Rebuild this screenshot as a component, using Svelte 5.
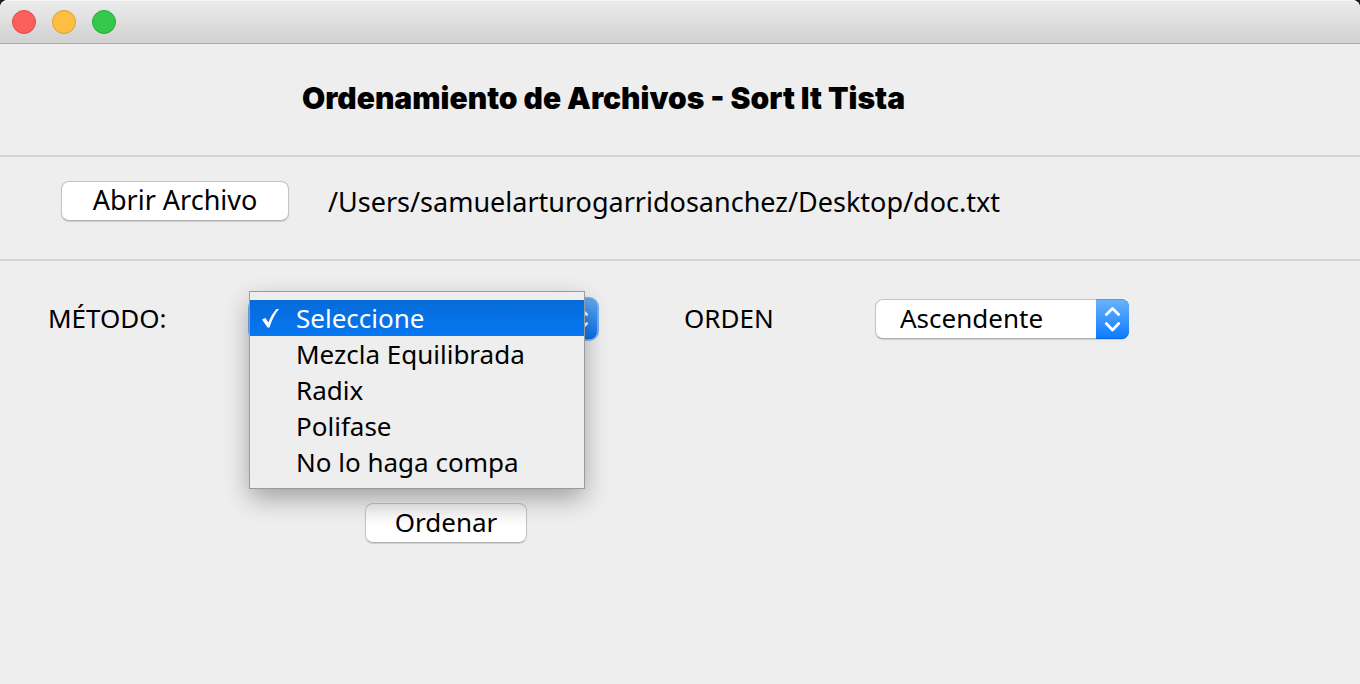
<script>
  const methods = ['Seleccione', 'Mezcla Equilibrada', 'Radix', 'Polifase', 'No lo haga compa'];
  let method = $state('Seleccione');
  let order = $state('Ascendente');
  let open = $state(true);

  function choose(name) {
    method = name;
    open = false;
  }
</script>

{#snippet arrows()}
  <span class="arrows">
    <svg viewBox="0 0 33 40" width="33" height="40" aria-hidden="true">
      <path d="M10.3 15.5 16.500 9.500l6.200 6M10.300 24.500 16.500 31l6.200-6.500" fill="none" stroke="#fff" stroke-width="2.700" stroke-linecap="round" stroke-linejoin="round" />
    </svg>
  </span>
{/snippet}

<div class="window">
  <header class="titlebar">
    <button class="light red" aria-label="Cerrar"></button>
    <button class="light yellow" aria-label="Minimizar"></button>
    <button class="light green" aria-label="Maximizar"></button>
  </header>

  <section class="heading">
    <h1>Ordenamiento de Archivos - Sort It Tista</h1>
  </section>

  <section class="file">
    <button class="push open-file">Abrir Archivo</button>
    <span class="path">/Users/samuelarturogarridosanchez/Desktop/doc.txt</span>
  </section>

  <main>
    <div class="fields">
      <label for="method">MÉTODO:</label>
      <div class="combo focused">
        <select id="method" bind:value={method} onmousedown={(e) => { e.preventDefault(); open = !open; }}>
          {#each methods as name}<option>{name}</option>{/each}
        </select>
        {@render arrows()}
        {#if open}
          <div class="menu" role="listbox" aria-label="Método">
            {#each methods as name}
              <button class="item" class:selected={name === method} role="option" aria-selected={name === method} onclick={() => choose(name)}>
                <span class="mark">
                  {#if name === method}
                    <svg viewBox="0 0 18 22" width="18" height="22" aria-hidden="true">
                      <path d="M0 12.500 3.500 11 6.500 15.500Q9 8 14.500 2H17Q11 9 7.500 20.500H5.500Z" fill="#fff" />
                    </svg>
                  {/if}
                </span>
                {name}
              </button>
            {/each}
          </div>
        {/if}
      </div>
      <label class="order-label" for="order">ORDEN</label>
      <div class="combo">
        <select id="order" bind:value={order}>
          <option>Ascendente</option>
          <option>Descendente</option>
        </select>
        {@render arrows()}
      </div>
    </div>
    <button class="push sort">Ordenar</button>
  </main>
</div>

<style>
  :global(body) {
    margin: 0;
    background: #eee;
  }
  .window {
    min-height: 100vh;
    background: #eee;
    color: #000;
    font: 26px/36px "Lucida Grande", "Noto Sans", sans-serif;
  }
  button, select {
    font: inherit;
    color: inherit;
    margin: 0;
  }
  .titlebar {
    box-sizing: border-box;
    height: 44px;
    padding: 0 12px;
    display: flex;
    align-items: center;
    gap: 16px;
    border-bottom: 1px solid #acacac;
    border-radius: 8px 8px 0 0;
    background: linear-gradient(#ececec, #d1d1d1);
    box-shadow: inset 0 1px #f7f7f7, 0 -8px 0 8px #201c28;
    clip-path: inset(0);
  }
  .light {
    width: 24px;
    height: 24px;
    padding: 0;
    border: 1px solid;
    border-radius: 50%;
  }
  .red { background: #fc605c; border-color: #e04a47; }
  .yellow { background: #fdbe41; border-color: #de9f34; }
  .green { background: #35c94b; border-color: #27aa35; }
  section {
    border-bottom: 2px solid #d4d4d4;
  }
  .heading {
    padding: 36px 24px 39px 302px;
  }
  h1 {
    margin: 0;
    font: 900 30px/36px "Arial Black", Inter, sans-serif;
  }
  .file {
    display: flex;
    align-items: center;
    gap: 39px;
    padding: 24px 24px 38px 61px;
    font-size: 27px;
  }
  .push {
    box-sizing: border-box;
    height: 40px;
    padding: 0 0 2px;
    border: 1px solid #c4c4c4;
    border-bottom-color: #b0b0b0;
    border-radius: 8px;
    background: #fff;
    box-shadow: 0 1px 1px #0002;
  }
  .open-file { width: 228px; }
  .path { padding-top: 2px; }
  main { padding: 38px 24px 24px 48px; }
  .fields {
    display: grid;
    grid-template-columns: 202px 348px 86px 191px 254px;
    align-items: center;
  }
  label { padding-bottom: 2px; }
  .order-label { grid-column: 4; }
  .combo {
    position: relative;
    height: 40px;
    display: flex;
  }
  select {
    appearance: none;
    box-sizing: border-box;
    width: 100%;
    height: 40px;
    padding: 0 40px 2px 24px;
    border: 1px solid #c4c4c4;
    border-bottom-color: #b0b0b0;
    border-radius: 8px;
    background: #fff;
    box-shadow: 0 1px 1px #0002;
    outline: none;
  }
  .arrows {
    position: absolute;
    top: 0;
    right: 0;
    width: 33px;
    height: 40px;
    display: flex;
    overflow: hidden;
    pointer-events: none;
    border-radius: 0 8px 8px 0;
    background: linear-gradient(#6cb3fa, #0a7bff);
    box-shadow: inset 0 -1px #0867e0, inset 0 1px #4f9eee;
  }
  .focused select { box-shadow: 0 0 0 2px #75aef0; }
  .focused .arrows { background: linear-gradient(#62a9f5, #0873f2); }
  .focused { margin-right: 1px; }
  .menu {
    position: absolute;
    z-index: 1;
    top: -7px;
    left: 0;
    width: 334px;
    padding: 8px 0;
    background: #eee;
    box-shadow: 0 0 0 1px #9b9b9b, 0 10px 24px #0005;
  }
  .item {
    width: 100%;
    height: 36px;
    padding: 0 0 0 12px;
    border: 0;
    background: none;
    display: flex;
    align-items: center;
    text-align: left;
  }
  .selected {
    color: #fff;
    background: linear-gradient(#066bd8, #0577f2);
  }
  .mark {
    width: 34px;
    height: 22px;
    display: flex;
  }
  .sort {
    display: block;
    width: 162px;
    margin: 164px 0 0 317px;
    background: linear-gradient(#f0f0f0, #fff 60%);
  }
</style>
